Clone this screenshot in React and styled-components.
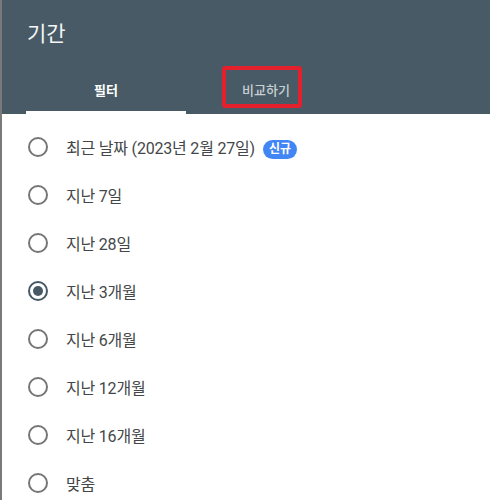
import React, { useState } from 'react'
import styled, { createGlobalStyle } from 'styled-components'

const GlobalStyle = createGlobalStyle`
    html, body {
        margin: 0;
        padding: 0;
        background: #7a7a7a;
        font-family: Roboto, "Noto Sans CJK KR", sans-serif;
    }
`

const Dialog = styled.div`
    margin-left: 2px;
    width: 488px;
    height: 500px;
    background: #ffffff;
    overflow: hidden;
`
const Header = styled.div`
    background: #475a65;
    color: #ffffff;
`
const Title = styled.div`
    height: 66px;
    box-sizing: border-box;
    padding: 17px 0 0 25px;
    font-size: 21px;
    line-height: 30px;
    font-family: "Noto Sans CJK KR", sans-serif;
    color: #f4f6f7;
`
const Tabs = styled.div`
    display: flex;
    padding-left: 24px;
    height: 48px;
`
const Tab = styled.div`
    position: relative;
    flex: 0 0 160px;
    display: flex;
    align-items: center;
    justify-content: center;
    font-size: 13px;
    font-weight: ${p => (p.$active ? 700 : 500)};
    color: ${p => (p.$active ? '#ffffff' : '#c9d0d4')};
    border-bottom: 3px solid ${p => (p.$active ? '#ffffff' : 'transparent')};
    box-sizing: border-box;
    padding-top: 2px;
`
const Highlight = styled.span`
    position: absolute;
    left: 36px;
    top: 0;
    display: block;
    width: 80px;
    height: 42px;
    box-sizing: border-box;
    border: 4px solid #e3202b;
    border-radius: 3px;
`
const List = styled.div`
    padding: 9px 0 0 26px;
`
const Option = styled.label`
    display: flex;
    align-items: center;
    height: 48px;
    cursor: pointer;
`
const Radio = styled.span`
    flex: none;
    width: 20px;
    height: 20px;
    box-sizing: border-box;
    border-radius: 50%;
    border: 2px solid ${p => (p.$checked ? '#455a64' : '#767676')};
    display: flex;
    align-items: center;
    justify-content: center;
    margin-right: 18px;
    &::after {
        content: '';
        width: 10px;
        height: 10px;
        border-radius: 50%;
        background: #455a64;
        display: ${p => (p.$checked ? 'block' : 'none')};
    }
`
const Label = styled.span`
    font-size: 16px;
    color: #444749;
    letter-spacing: -0.2px;
`
const Badge = styled.span`
    display: inline-block;
    margin-left: 8px;
    padding: 0 6px;
    height: 19px;
    line-height: 19px;
    border-radius: 10px;
    background: #4285f4;
    color: #ffffff;
    font-size: 12px;
    font-weight: 700;
    letter-spacing: 0;
    vertical-align: 1px;
`

const options = [
    { id: 'latest', label: '최근 날짜 (2023년 2월 27일)', badge: '신규' },
    { id: '7d', label: '지난 7일' },
    { id: '28d', label: '지난 28일' },
    { id: '3m', label: '지난 3개월' },
    { id: '6m', label: '지난 6개월' },
    { id: '12m', label: '지난 12개월' },
    { id: '16m', label: '지난 16개월' },
    { id: 'custom', label: '맞춤' },
]

export default function App() {
    const [selected, setSelected] = useState('3m')
    return (
        <>
            <GlobalStyle />
            <Dialog>
                <Header>
                    <Title>기간</Title>
                    <Tabs>
                        <Tab $active>필터</Tab>
                        <Tab>
                            비교하기
                            <Highlight />
                        </Tab>
                    </Tabs>
                </Header>
                <List>
                    {options.map(opt => (
                        <Option key={opt.id} onClick={() => setSelected(opt.id)}>
                            <Radio $checked={selected === opt.id} />
                            <Label>
                                {opt.label}
                                {opt.badge && <Badge>{opt.badge}</Badge>}
                            </Label>
                        </Option>
                    ))}
                </List>
            </Dialog>
        </>
    )
}
